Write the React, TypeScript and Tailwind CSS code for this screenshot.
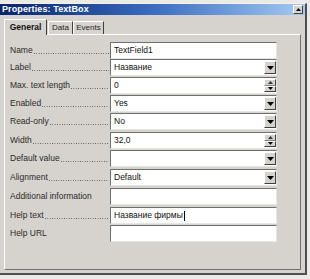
import React from 'react';

type Ctl = 'drop' | 'spin' | null;
type Row = { label: string; dots: boolean; value: string; h: string; ctl: Ctl; cursor?: boolean };

const rows: Row[] = [
  { label: 'Name', dots: true, value: 'TextField1', h: 'h-[17px]', ctl: null },
  { label: 'Label', dots: true, value: 'Название', h: 'h-[18px]', ctl: 'drop' },
  { label: 'Max. text length', dots: true, value: '0', h: 'h-[18px]', ctl: 'spin' },
  { label: 'Enabled', dots: true, value: 'Yes', h: 'h-[18px]', ctl: 'drop' },
  { label: 'Read-only', dots: true, value: 'No', h: 'h-[19px]', ctl: 'drop' },
  { label: 'Width', dots: true, value: '32,0', h: 'h-[18px]', ctl: 'spin' },
  { label: 'Default value', dots: true, value: '', h: 'h-[19px]', ctl: 'drop' },
  { label: 'Alignment', dots: true, value: 'Default', h: 'h-[19px]', ctl: 'drop' },
  { label: 'Additional information', dots: false, value: '', h: 'h-[19px]', ctl: null },
  { label: 'Help text', dots: true, value: 'Название фирмы', h: 'h-[18px]', ctl: null, cursor: true },
  { label: 'Help URL', dots: false, value: '', h: 'h-[17px]', ctl: null },
];

function DropBtn() {
  return (
    <div className="absolute right-0 top-[1px] bottom-[1px] w-[12px] bg-[#d6d3ce] border-t border-l border-t-white border-l-white border-r border-b border-r-[#404040] border-b-[#404040] flex items-center justify-center">
      <svg width="7" height="4" viewBox="0 0 7 4">
        <path d="M0 0 H7 L3.5 4 Z" fill="#000" />
      </svg>
    </div>
  );
}

function SpinBtn() {
  return (
    <div className="absolute right-0 top-[1px] bottom-[1px] w-[12px] flex flex-col">
      <div className="flex-1 bg-[#d6d3ce] border-t border-l border-t-white border-l-white border-r border-b border-r-[#404040] border-b-[#808080] flex items-center justify-center">
        <svg width="5" height="3" viewBox="0 0 5 3">
          <path d="M0 3 H5 L2.5 0 Z" fill="#333" />
        </svg>
      </div>
      <div className="flex-1 bg-[#d6d3ce] border-t border-l border-t-white border-l-white border-r border-b border-r-[#404040] border-b-[#404040] flex items-center justify-center">
        <svg width="5" height="3" viewBox="0 0 5 3">
          <path d="M0 0 H5 L2.5 3 Z" fill="#000" />
        </svg>
      </div>
    </div>
  );
}

export default function App() {
  return (
    <div
      className="w-[310px] h-[279px] bg-[#eceae6] overflow-hidden"
      style={{ fontFamily: '"Liberation Sans", Arial, sans-serif' }}
    >
      <div className="mt-[3px] w-[307px] h-[272px] bg-[#d6d3ce] border-t border-t-[#f4f2ee] border-r-2 border-r-[#505050] border-b-2 border-b-[#505050] flex flex-col">
        {/* title bar */}
        <div className="h-[11px] bg-gradient-to-r from-[#0a246a] via-[#3a6cc0] to-[#a6caf0] flex items-center justify-between pl-[2px] pr-[2px]">
          <span className="text-white font-bold text-[9px] leading-[11px] tracking-[0.1px]">Properties: TextBox</span>
          <div className="w-[10px] h-[9px] bg-[#d6d3ce] border-t border-l border-t-white border-l-white border-r border-b border-r-[#404040] border-b-[#404040] flex items-center justify-center">
            <svg width="5" height="3" viewBox="0 0 5 3">
              <path d="M0 3 H5 L2.5 0 Z" fill="#000" />
            </svg>
          </div>
        </div>

        {/* tabs */}
        <div className="pl-[4px] mt-[3px] flex items-end h-[16px] relative z-10">
          <div className="h-[16px] w-[43px] bg-[#d6d3ce] border-t border-l border-t-white border-l-white border-r border-r-[#404040] flex items-center justify-center -mb-[1px]">
            <span className="text-[8.5px] font-bold text-[#111] leading-[11px]">General</span>
          </div>
          <div className="h-[13px] w-[25px] ml-[1px] bg-[#d6d3ce] border-t border-l border-t-white border-l-white border-r border-r-[#404040] flex items-center justify-center">
            <span className="text-[8px] text-[#222] leading-[10px]">Data</span>
          </div>
          <div className="h-[13px] w-[31px] bg-[#d6d3ce] border-t border-l border-t-white border-l-white border-r border-r-[#404040] flex items-center justify-center">
            <span className="text-[8px] text-[#222] leading-[10px]">Events</span>
          </div>
        </div>

        {/* panel */}
        <div className="ml-[4px] w-[297px] h-[236px] bg-[#d6d3ce] border-t border-l border-t-white border-l-white border-r border-b border-r-[#707070] border-b-[#707070] pt-[7px] pl-[5px] flex flex-col">
          {rows.map((r) => (
            <div key={r.label} className={`${r.h} flex items-start shrink-0`}>
              <div className="w-[100px] h-[17px] flex items-center overflow-hidden whitespace-nowrap text-[8.5px] text-[#2a2a2a] leading-[11px]">
                <span className="shrink-0">{r.label}</span>
                {r.dots && (
                  <span className="flex-1 min-w-0 h-[1px] ml-[1px] mt-[6px] mr-[1px] bg-[linear-gradient(to_right,#555_1px,transparent_1px)] bg-[length:2.4px_1px] bg-repeat-x" />
                )}
              </div>
              <div className="relative w-[167px] h-[17px] bg-white border-t border-l border-t-[#707070] border-l-[#707070] border-b border-r border-b-[#e8e6e2] border-r-[#e8e6e2] flex items-center pl-[3px]">
                <span className="text-[8.5px] text-[#111] leading-[11px] whitespace-nowrap">{r.value}</span>
                {r.cursor && <span className="ml-[1px] w-[1px] h-[10px] bg-black" />}
                {r.ctl === 'drop' && <DropBtn />}
                {r.ctl === 'spin' && <SpinBtn />}
              </div>
            </div>
          ))}
        </div>
      </div>
    </div>
  );
}
